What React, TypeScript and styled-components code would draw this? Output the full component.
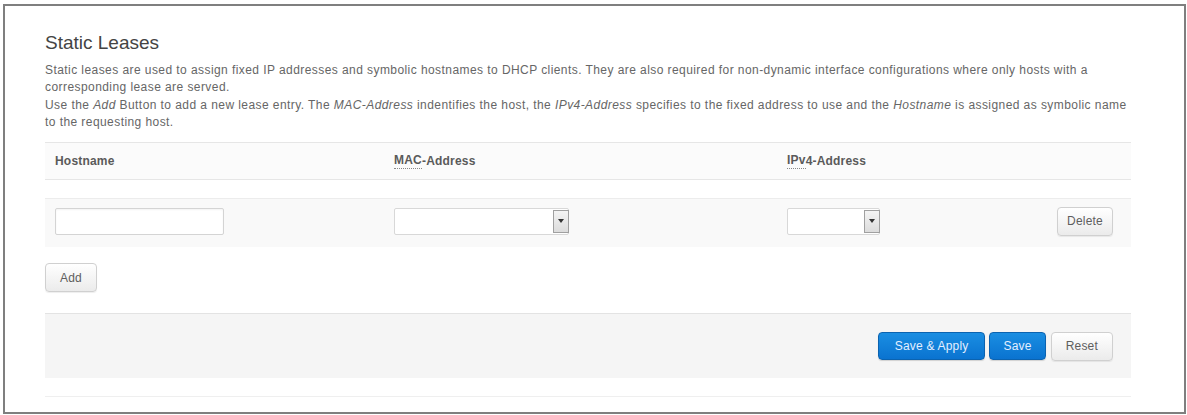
import React from "react";
import styled, { createGlobalStyle } from "styled-components";

const GlobalStyle = createGlobalStyle`
  html, body { margin: 0; padding: 0; background: #ffffff; }
  body { font-family: "Liberation Sans", Arial, sans-serif; }
  * { box-sizing: border-box; }
`;

const Frame = styled.div`
  margin: 4px 0 0 3px;
  width: 1183px;
  height: 410px;
  border: 2px solid #7f7f7f;
  padding: 26px 0 0 40px;
  background: #ffffff;
`;

const Section = styled.div`
  width: 1086px;
  display: flex;
  flex-direction: column;
`;

const Title = styled.h2`
  margin: 0;
  font-size: 19px;
  line-height: 22px;
  font-weight: normal;
  color: #444444;
`;

const Description = styled.div`
  margin-top: 8px;
  font-size: 12px;
  line-height: 17.3px;
  color: #666666;
  white-space: nowrap;
  letter-spacing: 0.43px;
  em { font-style: italic; }
`;

const Table = styled.div`
  margin-top: 11px;
  display: grid;
  grid-template-columns: 339px 393px 1fr auto;
`;

const HeadCell = styled.div`
  border-top: 1px solid #e6e6e6;
  background: #fbfbfb;
  height: 37px;
  padding: 0 10px;
  display: flex;
  align-items: center;
  font-size: 12px;
  font-weight: bold;
  color: #5a5a5a;
  letter-spacing: 0.2px;
`;

const Abbr = styled.span`
  border-bottom: 1px dotted #888;
  padding-bottom: 1px;
`;

const SpacerCell = styled.div`
  border-top: 1px solid #e6e6e6;
  height: 19px;
`;

const DataCell = styled.div<{ $last?: boolean }>`
  border-top: 1px solid #ececec;
  background: #f9f9f9;
  height: 49px;
  padding: ${(p) => (p.$last ? "0 18px 4px 10px" : "0 10px 4px 10px")};
  display: flex;
  align-items: center;
`;

const TextInput = styled.input`
  width: 169px;
  height: 27px;
  border: 1px solid #d4d4d4;
  border-radius: 2px;
  background: #ffffff;
  box-shadow: inset 0 1px 2px rgba(0, 0, 0, 0.05);
  font-family: "Liberation Sans", Arial, sans-serif;
  font-size: 12px;
  padding: 0 6px;
  outline: none;
`;

const SelectBox = styled.div<{ $w: number }>`
  width: ${(p) => p.$w}px;
  height: 27px;
  border: 1px solid #d8d8d8;
  border-radius: 2px;
  background: #ffffff;
  display: flex;
  justify-content: flex-end;
  align-items: stretch;
  padding: 1px 0;
`;

const ArrowBox = styled.div`
  width: 16px;
  margin-right: -1px;
  border: 1px solid #a0a0a0;
  background: linear-gradient(#f4f4f4, #dcdcdc);
  display: flex;
  align-items: center;
  justify-content: center;
`;

const Triangle = styled.span`
  width: 0;
  height: 0;
  border-left: 3.5px solid transparent;
  border-right: 3.5px solid transparent;
  border-top: 4px solid #333;
`;

const Button = styled.button<{ $primary?: boolean; $pad?: number }>`
  font-family: "Liberation Sans", Arial, sans-serif;
  font-size: 12px;
  height: ${(p) => (p.$primary ? "28px" : "29px")};
  padding: 0 ${(p) => p.$pad ?? 15}px;
  border-radius: 4px;
  cursor: pointer;
  letter-spacing: 0.2px;
  color: ${(p) => (p.$primary ? "#e3efff" : "#5e5e5e")};
  border: 1px solid ${(p) => (p.$primary ? "#0b63b0" : "#d0d0d0")};
  background: ${(p) =>
    p.$primary
      ? "linear-gradient(#1a8ee2, #0a73d0)"
      : "linear-gradient(#ffffff, #ebebeb)"};
  box-shadow: ${(p) =>
    p.$primary ? "0 1px 1px rgba(0,0,0,0.15)" : "0 1px 1px rgba(0,0,0,0.07)"};
`;

const ResetButton = styled(Button)`
  margin-left: 1px;
`;

const AddRow = styled.div`
  margin-top: 16px;
  display: flex;
`;

const Actions = styled.div`
  margin-top: 21px;
  border-top: 1px solid #e3e3e3;
  background: #f5f5f5;
  height: 65px;
  padding: 0 18px 0 0;
  display: flex;
  align-items: center;
  justify-content: flex-end;
  gap: 4px;
`;

const BottomRule = styled.div`
  margin-top: 18px;
  border-top: 1px solid #efefef;
`;

export default function App() {
  return (
    <>
      <GlobalStyle />
      <Frame>
        <Section>
          <Title>Static Leases</Title>
          <Description>
            Static leases are used to assign fixed IP addresses and symbolic hostnames to DHCP clients. They are also required for non-dynamic interface configurations where only hosts with a
            <br />
            corresponding lease are served.
            <br />
            Use the <em>Add</em> Button to add a new lease entry. The <em>MAC-Address</em> indentifies the host, the <em>IPv4-Address</em> specifies to the fixed address to use and the <em>Hostname</em> is assigned as symbolic name
            <br />
            to the requesting host.
          </Description>
          <Table>
            <HeadCell>Hostname</HeadCell>
            <HeadCell>
              <Abbr>MAC</Abbr>-Address
            </HeadCell>
            <HeadCell>
              <Abbr>IPv</Abbr>4-Address
            </HeadCell>
            <HeadCell />
            <SpacerCell />
            <SpacerCell />
            <SpacerCell />
            <SpacerCell />
            <DataCell>
              <TextInput type="text" />
            </DataCell>
            <DataCell>
              <SelectBox $w={175}>
                <ArrowBox>
                  <Triangle />
                </ArrowBox>
              </SelectBox>
            </DataCell>
            <DataCell>
              <SelectBox $w={93}>
                <ArrowBox>
                  <Triangle />
                </ArrowBox>
              </SelectBox>
            </DataCell>
            <DataCell $last>
              <Button $pad={9}>Delete</Button>
            </DataCell>
          </Table>
          <AddRow>
            <Button $pad={14}>Add</Button>
          </AddRow>
          <Actions>
            <Button $primary $pad={16}>Save &amp; Apply</Button>
            <Button $primary $pad={13}>Save</Button>
            <ResetButton $pad={14}>Reset</ResetButton>
          </Actions>
          <BottomRule />
        </Section>
      </Frame>
    </>
  );
}
